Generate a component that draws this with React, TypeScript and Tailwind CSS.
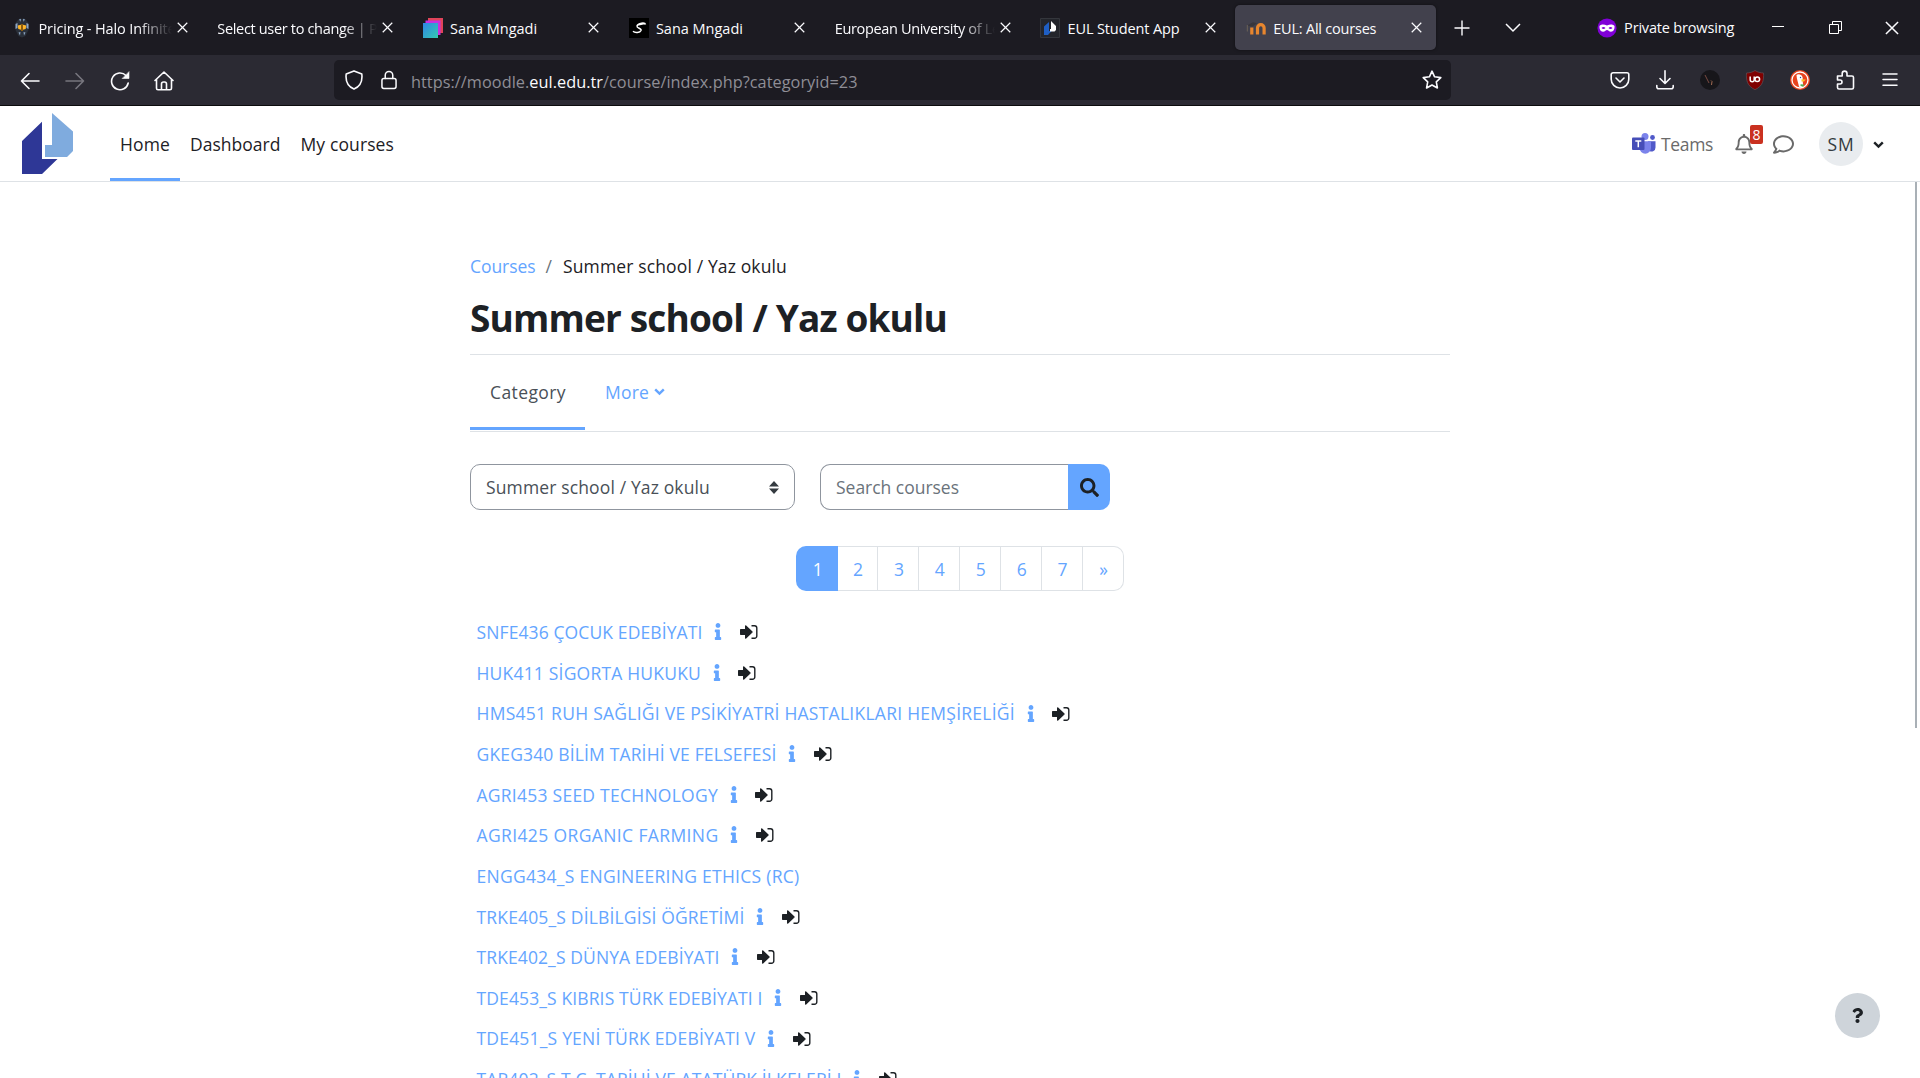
import { useLayoutEffect, useRef } from "react";
import type { ReactNode } from "react";
import { FaInfo, FaSearch, FaRegBell, FaRegComment, FaQuestion } from "react-icons/fa";

/* Spreads the letters of a label so that it fills the given width. */
function Fit({ w, className = "", children }: { w: number; className?: string; children: ReactNode }) {
  const ref = useRef<HTMLSpanElement>(null);
  useLayoutEffect(() => {
    const el = ref.current;
    if (!el) return;
    el.style.letterSpacing = "0px";
    const n = (el.textContent || "").length;
    const natural = el.getBoundingClientRect().width;
    el.style.letterSpacing = `${(w - natural) / n}px`;
  }, [w]);
  return (
    <span ref={ref} className={`inline-block shrink-0 whitespace-nowrap ${className}`}>
      {children}
    </span>
  );
}

const Cross = ({ s = 11 }: { s?: number }) => (
  <svg width={s} height={s} viewBox="0 0 12 12" fill="none" stroke="#fbfbfe" strokeWidth="1.3">
    <path d="M0.8 0.8 11.2 11.2M11.2 0.8 0.8 11.2" />
  </svg>
);

const Chevron = ({ className = "" }: { className?: string }) => (
  <svg className={className} width="11" height="8" viewBox="0 0 11 8" fill="none" stroke="currentColor" strokeWidth="2.4">
    <path d="M1.200 1.300 5.500 5.600 9.800 1.300" />
  </svg>
);

const HaloIcon = () => (
  <svg width="20" height="20" viewBox="0 0 20 20">
    <path d="M7 .8h6l3.500 4.200v7L13.500 18l-3.500 1.500L6.500 18l-3-6V5z" fill="#2a303a" />
    <path d="M7 1.500l2-.7-.5 3zM13 1.500l-2-.7.5 3zM3.500 6l2-1v5l-2 1zM16.500 6l-2-1v5l2 1zM6.500 14.500l2-.5-.5 3.500zM13.500 14.500l-2-.5.5 3.500z" fill="#8ea6c4" />
    <path d="M5.800 7.500 9 6.800v5l-2.700-.8zM14.200 7.500 11 6.800v5l2.700-.8z" fill="#ffb62a" />
    <path d="M9 6h2v7H9z" fill="#8a5c10" />
  </svg>
);
const LayersIcon = () => (
  <svg width="20" height="20" viewBox="0 0 20 20">
    <defs>
      <linearGradient id="teal" x1="0" y1="0" x2="1" y2="1">
        <stop offset="0" stopColor="#2f86e8" />
        <stop offset="1" stopColor="#35c9b0" />
      </linearGradient>
    </defs>
    <path d="M5 0h15v15H5z" fill="#e0445a" />
    <path d="M2.500 2.500h15V17h-15z" fill="#c92fe0" />
    <path d="M0 5h15v15H0z" fill="url(#teal)" />
  </svg>
);
const ScriptIcon = () => (
  <svg width="20" height="20" viewBox="0 0 20 20">
    <path d="M0 0h20v20H0z" fill="#000" />
    <path d="M16.500 6.500C16 4 9 5 8 8c-.5 2.500 5 2 4 4.500-1 2.300-6 2.800-8 .8M8.500 7l7-1.500" fill="none" stroke="#fff" strokeWidth="1.5" />
  </svg>
);
const AppIcon = () => (
  <svg width="20" height="20" viewBox="0 0 20 20">
    <path d="M.5.5h19v19H.5z" fill="#23252b" stroke="#34363c" />
    <path d="M4 8.500 9 4v9h2.500L8 17H4z" fill="#1f5fc4" />
    <path d="M11 3l5 5v4l-1.500 1.500H10V11h1z" fill="#fff" />
  </svg>
);
const MoodleIcon = () => (
  <svg width="20" height="20" viewBox="0 0 20 20" fill="none">
    <path d="M5.800 16.500V9.500M11.500 16.500V10a3.300 3.300 0 0 1 6.600 0v6.500" stroke="#e8862e" strokeWidth="3.200" />
    <path d="M.8 7.500 7 4.200l4 1L6.500 8.500z" fill="#38363c" />
    <path d="M1.300 7v6.500" stroke="#6b6258" />
  </svg>
);

type TabData = { title: string; icon?: ReactNode; w: number; active?: boolean; fade?: boolean };
const tabs: TabData[] = [
  { title: "Pricing - Halo Infinite", icon: <HaloIcon />, w: 137, fade: true },
  { title: "Select user to change | P", w: 160, fade: true },
  { title: "Sana Mngadi", icon: <LayersIcon />, w: 87 },
  { title: "Sana Mngadi", icon: <ScriptIcon />, w: 87 },
  { title: "European University of Le", w: 165, fade: true },
  { title: "EUL Student App", icon: <AppIcon />, w: 112 },
  { title: "EUL: All courses", icon: <MoodleIcon />, w: 103, active: true },
];

function Tab({ t }: { t: TabData }) {
  return (
    <div
      className={`mr-[4.8px] flex h-[45px] w-[201px] shrink-0 items-center rounded-[5px] pr-[9px] pl-[11px] ${
        t.active ? "bg-[#42414d] shadow-[0_0_3px_rgba(0,0,0,0.5)]" : ""
      }`}
    >
      {t.icon && <span className="mr-[7px] shrink-0">{t.icon}</span>}
      <div
        className={`min-w-0 flex-1 overflow-hidden ${
          t.fade ? "[mask-image:linear-gradient(to_right,black_calc(100%-34px),transparent)]" : ""
        }`}
      >
        <Fit w={t.w} className="text-[14.5px] text-[#fbfbfe]">{t.title}</Fit>
      </div>
      <span className="flex w-[21px] shrink-0 justify-center"><Cross /></span>
    </div>
  );
}

function TabBar() {
  return (
    <div className="flex h-[55px] items-center bg-[#1c1b22] pl-[0.500px]">
      {tabs.map((t, i) => <Tab key={i} t={t} />)}
      <svg className="ml-[13px] shrink-0" width="16" height="16" viewBox="0 0 16 16" stroke="#fbfbfe" strokeWidth="1.4"><path d="M8 .5v15M.5 8h15" /></svg>
      <svg className="ml-[35px] shrink-0" width="16" height="16" viewBox="0 0 16 16" fill="none" stroke="#fbfbfe" strokeWidth="1.500"><path d="M1 4l7 7 7-7" /></svg>
      <svg className="ml-[76px] shrink-0" width="20" height="20" viewBox="0 0 20 20">
        <circle cx="10" cy="10" r="9.600" fill="#8000d7" />
        <path d="M2.500 8C4 6 7 6 10 7.500 13 6 16 6 17.500 8c.3 3-1 5.700-3.500 5.700-2 0-3-1.700-4-1.700s-2 1.700-4 1.700C3.500 13.700 2.200 11 2.500 8z" fill="#fff" />
        <path d="M4.500 10q2-2.200 4 0-2 2-4 0M11.500 10q2-2.200 4 0-2 2-4 0" fill="#8000d7" />
      </svg>
      <Fit w={110} className="ml-[7px] text-[14.5px] text-[#fbfbfe]">Private browsing</Fit>
      <span className="mb-[2px] ml-[38px] h-px w-[12px] bg-white" />
      <svg className="ml-[45px] shrink-0" width="13" height="13" viewBox="0 0 13 13" fill="none" stroke="#fff"><path d="M.5 3.500h9v9h-9zM3.500 3.500v-3h9v9h-3" /></svg>
      <span className="ml-[43px]"><Cross s={14} /></span>
    </div>
  );
}

const ic = { fill: "none", stroke: "#fbfbfe", strokeWidth: 1.6, strokeLinecap: "round", strokeLinejoin: "round" } as const;

function ToolBar() {
  return (
    <div className="flex h-[51px] items-center border-b border-[#0c0c0d] bg-[#2b2a33] pl-[20px]">
      <svg className="mt-px" width="20" height="20" viewBox="0 0 20 20" {...ic}><path d="M19 10H1.500M9 2.500 1.500 10 9 17.500" /></svg>
      <svg className="mt-px ml-[25px]" width="20" height="20" viewBox="0 0 20 20" {...ic} stroke="#77767e"><path d="M1 10h17.500M11 2.500l7.500 7.500-7.500 7.500" /></svg>
      <svg className="mt-px ml-[25px]" width="20" height="20" viewBox="0 0 20 20" {...ic}><path d="M18.200 12A8.400 8.400 0 1 1 16 4.500" /><path d="M19 1v6.500h-6.500z" fill="#fbfbfe" strokeWidth=".6" /></svg>
      <svg className="mt-px ml-[24px]" width="20" height="20" viewBox="0 0 20 20" {...ic}><path d="M1 9.500 10 1l9 8.500M2.500 8.500v8.700A1.500 1.500 0 0 0 4 18.700h12a1.500 1.500 0 0 0 1.500-1.500V8.500M7.500 18.500V13a2 2 0 0 1 2-2h1a2 2 0 0 1 2 2v5.500" /></svg>
      <div className="ml-[160px] flex h-[40px] w-[1117px] items-center rounded-[5px] bg-[#1c1b22] pr-[9px] pl-[11px]">
        <svg width="18" height="20" viewBox="0 0 18 20" {...ic}><path d="M9 .9 16.800 4c.6 5-.6 12-7.800 15.100C1.800 16 .6 9 1.200 4z" /></svg>
        <svg className="ml-[18px]" width="16" height="20" viewBox="0 0 17 20" {...ic}><rect x="1" y="8.500" width="15" height="10.500" rx="2" /><path d="M4.500 8.500V5a4 4 0 0 1 8 0v3.500" /></svg>
        <Fit w={446.5} className="mt-[4px] ml-[14px] text-[16.300px] text-[#8f8e96]">
          https://moodle.<span className="text-[#fbfbfe]">eul.edu.tr</span>/course/index.php?categoryid=23
        </Fit>
        <svg className="ml-auto" width="20" height="20" viewBox="0 0 20 20" {...ic}><path d="m10 1.200 2.600 5.600 6.200.8-4.500 4.200 1.100 6.200L10 15l-5.400 3 1.100-6.200L1.200 7.600l6.200-.8z" /></svg>
      </div>
      <div className="ml-auto flex items-center gap-[25px] pr-[20px]">
        <svg width="20" height="20" viewBox="0 0 20 20" {...ic}><path d="M3 2.800h14a1.800 1.800 0 0 1 1.800 1.800v4.600a8.800 8.800 0 0 1-17.600 0V4.600A1.800 1.800 0 0 1 3 2.800zM6 8l4 4 4-4" /></svg>
        <svg width="20" height="20" viewBox="0 0 20 20" {...ic}><path d="M10 .8v12.500M5 8.500l5 5 5-5M1.800 15.500v1.200a2 2 0 0 0 2 2h12.400a2 2 0 0 0 2-2v-1.200" /></svg>
        <svg width="20" height="20" viewBox="0 0 20 20" fill="none"><circle cx="10" cy="10" r="10" fill="#17161a" /><path d="m5 5 4 8" stroke="#7a4b42" /><path d="M11 10.500l1 1-.5 3.500" stroke="#a36b52" /></svg>
        <svg width="20" height="20" viewBox="0 0 20 20"><path d="M10 .5c2.500 1.800 5.500 2.300 8.500 2.500.5 7-.5 13-8.500 16.700C2 16 1 10 1.500 3 4.500 2.800 7.500 2.300 10 .5z" fill="#800000" stroke="#5c4a50" strokeWidth=".8" /><path d="M5.200 6.500v3.200q0 2 2 2t2-2V6.500" fill="none" stroke="#fff" strokeWidth="1.500" /><circle cx="12.300" cy="9.300" r="2.300" fill="none" stroke="#fff" strokeWidth="1.500" /></svg>
        <svg width="20" height="20" viewBox="0 0 20 20"><circle cx="10" cy="10" r="10" fill="#e8431f" /><circle cx="10" cy="10" r="8" fill="#e8431f" stroke="#fff" strokeWidth="1.300" /><path d="M6.500 5C8 3.500 11.500 4 12.500 7c.5 2 0 3 .3 5l.4 4.500c-1.500.8-3 .8-4.200.3C8.500 13 6.500 9 6.500 5z" fill="#fff" /><path d="M11.500 9.300l4.300.3-1.800 1.900h-2.500z" fill="#fbc02d" /><path d="M10.500 14.200l3.700.3-1 2.300-2.700-.8z" fill="#4caf50" /><circle cx="10.500" cy="7.500" r=".7" fill="#234c8c" /></svg>
        <svg width="20" height="20" viewBox="0 0 20 20" {...ic}><path d="M2.500 6h4.700V3.500a2.400 2.400 0 0 1 4.800 0V6h5a1.500 1.500 0 0 1 1.500 1.500v10A1.500 1.500 0 0 1 17 19H4a1.500 1.500 0 0 1-1.500-1.500V14H5a1.900 1.900 0 0 0 0-4H2.500z" /></svg>
        <svg width="20" height="20" viewBox="0 0 20 20" {...ic} strokeWidth="1.5"><path d="M3 4h14M3 9.600h14M3 15.200h14" /></svg>
      </div>
    </div>
  );
}

const TeamsIcon = () => (
  <svg width="24" height="22" viewBox="0 0 24 22">
    <circle cx="20.500" cy="4.500" r="2.400" fill="#5059c9" />
    <path d="M16 8.200h7.500v6.300a4 4 0 0 1-6 3.500z" fill="#5059c9" />
    <circle cx="13" cy="3.600" r="3.500" fill="#7b83eb" />
    <path d="M7.500 8.200H19v6.800a5.700 5.700 0 0 1-11.500 0z" fill="#7b83eb" />
    <rect x="0" y="4.500" width="12.500" height="12.500" rx="1" fill="#464eb8" />
    <path d="M3.300 7.900h6M6.300 7.900v6.300" stroke="#fff" strokeWidth="1.500" />
  </svg>
);

function NavBar() {
  return (
    <div className="flex h-[76px] items-stretch border-b border-[#dee2e6] bg-white pl-[20px] text-[#1d2125]">
      <svg className="mt-[5px]" width="55" height="66" viewBox="0 0 55 66">
        <path d="M22 10.700V48h15.500L22 63H2V30z" fill="#2e3796" />
        <path d="m32 2 21 18.500V40l-6 6H25V34h7z" fill="#7fabde" />
      </svg>
      <div className="ml-[35px] flex border-b-[3px] border-[#64a5ff] px-[10px]">
        <Fit w={50} className="mt-[25px] text-[17.500px]">Home</Fit>
      </div>
      <Fit w={90.5} className="mt-[25px] ml-[10px] text-[17.500px]">Dashboard</Fit>
      <Fit w={93.5} className="mt-[25px] ml-[20px] text-[17.500px]">My courses</Fit>
      <div className="ml-auto flex items-center pr-[36px] text-[#6a6a6a]">
        <TeamsIcon />
        <Fit w={52} className="mt-[2px] ml-[5px] text-[17.500px]">Teams</Fit>
        <div className="relative ml-[21px]">
          <FaRegBell size={20} />
          <span className="absolute -top-[9px] left-[16px] flex h-[19px] w-[13px] items-center justify-center rounded-[2px] bg-[#ca3120] pt-px text-[14px] text-white">8</span>
        </div>
        <FaRegComment className="mt-[2px] ml-[19px]" size={21} />
        <div className="ml-[25px] flex h-[44px] w-[44px] items-center justify-center rounded-full bg-[#e9ecef] pt-[2px] text-[#343a40]">
          <Fit w={27} className="text-[17.500px]">SM</Fit>
        </div>
        <Chevron className="mt-[3px] ml-[10px] text-[#1d2125]" />
      </div>
    </div>
  );
}

const pages = ["2", "3", "4", "5", "6", "7", "»"];
const courses: [string, number, boolean][] = [
  ["SNFE436 ÇOCUK EDEBİYATI", 226, true],
  ["HUK411 SİGORTA HUKUKU", 224.5, true],
  ["HMS451 RUH SAĞLIĞI VE PSİKİYATRİ HASTALIKLARI HEMŞİRELİĞİ", 538.5, true],
  ["GKEG340 BİLİM TARİHİ VE FELSEFESİ", 300, true],
  ["AGRI453 SEED TECHNOLOGY", 241.5, true],
  ["AGRI425 ORGANIC FARMING", 242, true],
  ["ENGG434_S ENGINEERING ETHICS (RC)", 323, false],
  ["TRKE405_S DİLBİLGİSİ ÖĞRETİMİ", 268, true],
  ["TRKE402_S DÜNYA EDEBİYATI", 243, true],
  ["TDE453_S KIBRIS TÜRK EDEBİYATI I", 286, true],
  ["TDE451_S YENİ TÜRK EDEBİYATI V", 279, true],
  ["TAR402_S T.C. TARİHİ VE ATATÜRK İLKELERİ I", 365, true],
];

const LoginIcon = () => (
  <svg className="ml-[16.500px]" width="18" height="16" viewBox="0 0 18 16">
    <path d="M.7 5.700h5V1.900l6.300 6.100-6.300 6.100v-3.800h-5z" fill="#1d2125" stroke="#1d2125" strokeWidth="1.400" strokeLinejoin="round" />
    <path d="M11.500 1.700H14.500a2.300 2.300 0 0 1 2.300 2.300v8a2.300 2.300 0 0 1-2.300 2.300h-3" fill="none" stroke="#1d2125" strokeWidth="1.400" />
  </svg>
);

export default function App() {
  return (
    <div className="relative h-[1078px] w-[1920px] overflow-hidden bg-white font-['Open_Sans','Noto_Sans',sans-serif] text-[#1d2125]">
      <TabBar />
      <ToolBar />
      <NavBar />
      <main className="ml-[470px] w-[980px]">
        <div className="mt-[70px] flex h-[28px] items-center text-[17.500px]">
          <Fit w={65.5} className="text-[#64a5ff]">Courses</Fit>
          <span className="ml-[10px] w-[17.500px] text-[#6a737b]">/</span>
          <Fit w={224}>Summer school / Yaz okulu</Fit>
        </div>
        <h1 className="mt-[13px] flex h-[50px] items-center text-[37px] font-bold">
          <Fit w={477}>Summer school / Yaz okulu</Fit>
        </h1>
        <div className="mt-[11px] flex h-[78px] border-y border-[#dee2e6] pb-px text-[17.500px]">
          <div className="flex items-center border-b-[3px] border-[#64a5ff] pt-[2px] pr-[19px] pl-[20px] text-[#495057]">
            <Fit w={76}>Category</Fit>
          </div>
          <div className="flex items-center gap-[5px] pt-[2px] pb-[3px] pl-[20px] text-[#64a5ff]">
            <Fit w={44}>More</Fit>
            <Chevron />
          </div>
        </div>
        <div className="mt-[32px] flex h-[46px] text-[17.500px]">
          <div className="flex w-[325px] items-center justify-between rounded-[10px] border border-[#8f959e] px-[15px] text-[#495057]">
            <Fit w={224}>Summer school / Yaz okulu</Fit>
            <svg width="10" height="13" viewBox="0 0 10 13" fill="#343a40"><path d="M5 0l5 5.500H0zM5 13l5-5.500H0z" /></svg>
          </div>
          <div className="ml-[25px] flex w-[248px] items-center rounded-l-[10px] border border-r-0 border-[#8f959e] pl-[15px] text-[#6a737b]">
            <Fit w={123}>Search courses</Fit>
          </div>
          <div className="flex w-[42px] items-center justify-center rounded-r-[10px] bg-[#64a5ff]"><FaSearch size={19} /></div>
        </div>
        <div className="mt-[36px] ml-[326px] flex h-[45px] w-[328px] text-[17.500px] text-[#64a5ff]">
          <div className="flex w-[41.500px] items-center justify-center rounded-l-[10px] bg-[#64a5ff] pt-[2px] pl-[2px] text-white">1</div>
          {pages.map((p) => (
            <div key={p} className="flex flex-1 items-center justify-center border-y border-r border-[#dee2e6] pt-[2px] pl-px last:rounded-r-[10px]">{p}</div>
          ))}
        </div>
        <ul className="mt-[21px] pl-[6.500px] text-[17.500px] text-[#64a5ff]">
          {courses.map(([name, w, icons]) => (
            <li key={name} className="flex h-[40.640px] items-center">
              <Fit w={w}>{name}</Fit>
              {icons && (
                <>
                  <FaInfo className="mb-px ml-[10.500px] w-[10px]" size={17} />
                  <LoginIcon />
                </>
              )}
            </li>
          ))}
        </ul>
      </main>
      <div className="absolute top-[182px] left-[1915px] h-[546px] w-[2px] bg-[#a9b0b6]" />
      <div className="absolute top-[993px] left-[1835px] flex h-[45px] w-[45px] items-center justify-center rounded-full bg-[#ced4da]">
        <FaQuestion size={15} />
      </div>
    </div>
  );
}
